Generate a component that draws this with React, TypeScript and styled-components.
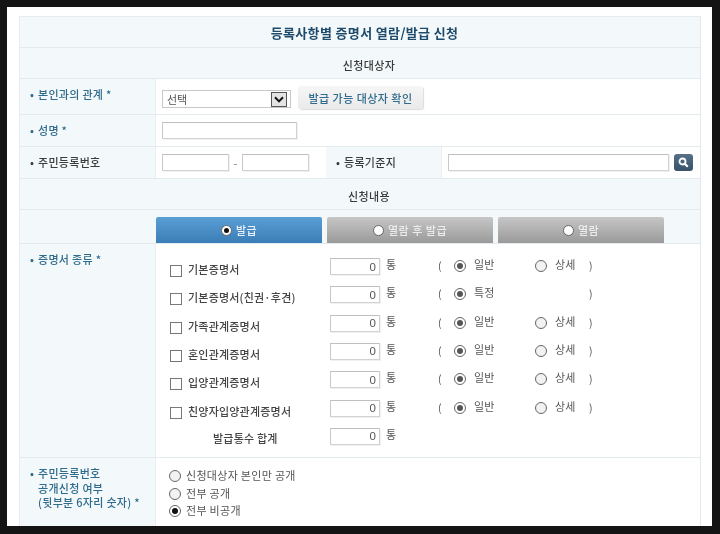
import React from "react";
import styled, { createGlobalStyle } from "styled-components";

const Global = createGlobalStyle`
  html, body { margin: 0; padding: 0; background: #141414; }
  body { font-family: "Noto Sans CJK KR", "Liberation Sans", sans-serif; color: #444; }
`;

const Frame = styled.div`
  width: 720px; height: 534px; box-sizing: border-box;
  padding: 7px 8px 8px 7px; background: #141414; overflow: hidden;
`;
const Panel = styled.div`
  height: 519px; box-sizing: border-box; background: #fff;
  padding: 9px 11px 0 12px; overflow: hidden; filter: blur(0.35px);
`;
const Table = styled.div`
  width: 682px; height: 510px; box-sizing: border-box;
  border-left: 1px solid #e6ecef; border-right: 1px solid #e4e8ea; border-top: 1px solid #e6ecef;
  display: flex; flex-direction: column;
`;
const HeadRow = styled.div<{ $h: number; $shift: number; $title?: boolean }>`
  flex: 0 0 ${p => p.$h}px; box-sizing: border-box;
  display: flex; align-items: center; justify-content: center;
  padding-left: ${p => p.$shift}px; padding-top: ${p => (p.$title ? 0 : 3)}px;
  background: #f3f8fa; border-bottom: 1px solid #e4ebee;
  font-size: ${p => (p.$title ? 13 : 11)}px;
  font-weight: ${p => (p.$title ? 700 : 500)};
  color: ${p => (p.$title ? "#1e4a6c" : "#3a3a3a")};
  letter-spacing: ${p => (p.$title ? "0.35px" : "0.4px")};
`;
const Row = styled.div<{ $h: number }>`
  flex: 0 0 ${p => p.$h}px; box-sizing: border-box;
  display: flex; border-bottom: 1px solid #e4ebee;
`;
const LabelCell = styled.div<{ $w: number; $top?: number; $center?: boolean; $dark?: boolean }>`
  flex: 0 0 ${p => p.$w}px; box-sizing: border-box;
  background: #f3f8fa; border-right: 1px solid #e8eef1;
  padding: ${p => p.$top ?? 0}px 0 0 10px;
  display: flex; align-items: ${p => (p.$center ? "center" : "flex-start")};
  font-size: 11px; font-weight: 500; line-height: 14.5px; letter-spacing: 0.3px;
  color: ${p => (p.$dark ? "#3c3c3c" : "#2f6b8c")};
`;
const Bullet = styled.span`
  flex: 0 0 8px; color: inherit;
`;
const ValueCell = styled.div<{ $pad?: number; $align?: string; $fixed?: number }>`
  flex: ${p => (p.$fixed ? `0 0 ${p.$fixed}px` : "1")}; box-sizing: border-box; min-width: 0;
  display: flex; align-items: ${p => p.$align ?? "flex-start"};
  padding-left: ${p => p.$pad ?? 6}px;
`;
const TextInput = styled.input<{ $w: number }>`
  width: ${p => p.$w}px; height: 17px; box-sizing: border-box;
  border: 1px solid #d2d2d2; border-top-color: #c0c0c0; border-left-color: #c8c8c8;
  background: #fff; padding: 0 3px; margin: 0; outline: none;
  box-shadow: 1px 1px 0 #f0f0f0; font: 11.5px "Liberation Sans", sans-serif; color: #555; text-align: right;
`;
const SelectBox = styled.div`
  position: relative; width: 129px; height: 18px; box-sizing: border-box;
  margin-top: 11px; border: 1px solid #c8c8c8; background: #fff;
  font-size: 11px; line-height: 16px; padding-left: 4px; color: #555;
`;
const SelectArrow = styled.span`
  position: absolute; right: 3px; top: 1px; width: 16px; height: 15px; box-sizing: border-box;
  border: 1px solid #555; background: #e4e4e4; display: flex; align-items: center; justify-content: center;
`;
const CheckButton = styled.button`
  margin: 7px 0 0 7px; width: 125px; height: 23px; box-sizing: border-box;
  border: 0; border-radius: 3px; background: linear-gradient(#f6f6f6, #eaeaea);
  box-shadow: 1px 1px 1px #ddd; padding: 0;
  font: 500 11px "Noto Sans CJK KR", sans-serif; letter-spacing: 0.45px; color: #2f6b8c;
`;
const Dash = styled.span`
  width: 13px; text-align: center; font-size: 11px; color: #777; line-height: 16px;
`;
const SearchButton = styled.button`
  margin: 0 0 0 5px; width: 19px; height: 17px; padding: 0; border: 0; border-radius: 3px;
  background: linear-gradient(#567086, #37516a); display: flex; align-items: center; justify-content: center;
`;
const Tab = styled.div<{ $active?: boolean }>`
  flex: 0 0 166px; height: 26px; box-sizing: border-box; border-radius: 2px 2px 0 0;
  display: flex; align-items: center; justify-content: center; gap: 4px;
  background: ${p => (p.$active ? "linear-gradient(#5b9fd7, #3b7db6)" : "linear-gradient(#c6c6c6, #9a9a9a)")};
  color: ${p => (p.$active ? "#e8f2fa" : "#ececec")};
  font-size: 11px; font-weight: 500; letter-spacing: 0.5px;
`;
const TabRow = styled.div`
  flex: 0 0 34px; box-sizing: border-box; display: flex; background: #f3f8fa;
  padding: 7px 0 0 136px; gap: 5px; border-bottom: 1px solid #e4ebee;
`;
const TabDot = styled.span<{ $on?: boolean }>`
  width: 11px; height: 11px; box-sizing: border-box; border-radius: 50%; background: #fff;
  border: 1px solid #666; display: flex; align-items: center; justify-content: center;
  &::after { content: ""; width: 5px; height: 5px; border-radius: 50%; background: ${p => (p.$on ? "#111" : "transparent")}; }
`;
const CertList = styled.div`
  padding: 14px 0 0 14px; display: flex; flex-direction: column;
`;
const CertRow = styled.div`
  height: 28.33px; display: grid; align-items: start; color: #444;
  grid-template-columns: 18px 142px 51px 57px 16px 20px 61px 20px 34px 10px;
  font-size: 11px; letter-spacing: 0.2px;
`;
const Box = styled.span`
  width: 12px; height: 12px; box-sizing: border-box; margin-top: 7px; border: 1.5px solid #777; background: #fff;
`;
const CertName = styled.span`
  line-height: 14px; margin-top: 4px; white-space: nowrap; font-weight: 500; color: #444;
`;
const TotalName = styled.span`
  grid-column: 1 / span 2; padding-left: 43px; line-height: 14px; margin-top: 3px; font-weight: 500; color: #444;
`;
const Unit = styled.span`
  padding-left: 5px; line-height: 14px; margin-top: -1px; color: #555;
`;
const Paren = styled.span`
  line-height: 16px; margin-top: 0; color: #555; font-size: 10.5px;
`;
const Opt = styled.span`
  line-height: 14px; margin-top: -1px; color: #555;
`;
const Radio = styled.span<{ $on?: boolean; $dark?: boolean; $top?: number }>`
  width: 12px; height: 12px; box-sizing: border-box; margin-top: ${p => p.$top ?? 2}px;
  border-radius: 50%; border: 1px solid #666; background: ${p => (p.$on ? "#fff" : "#f2f2f2")};
  display: flex; align-items: center; justify-content: center;
  &::after { content: ""; width: 6px; height: 6px; border-radius: 50%;
    background: ${p => (p.$on ? (p.$dark ? "#111" : "#555") : "transparent")}; }
`;
const Disclosure = styled.div`
  padding: 11px 0 0 13px; display: flex; flex-direction: column; gap: 3.5px;
`;
const DisclosureItem = styled.div`
  display: flex; align-items: flex-start; gap: 5px; height: 14px;
  font-size: 11px; line-height: 13px; letter-spacing: 0.3px; color: #555;
`;
const LabelText = styled.div`
  display: flex; flex-direction: column;
`;

type Cert = { name: string; first: string; second?: string };
const certs: Cert[] = [
  { name: "기본증명서", first: "일반", second: "상세" },
  { name: "기본증명서(친권·후견)", first: "특정" },
  { name: "가족관계증명서", first: "일반", second: "상세" },
  { name: "혼인관계증명서", first: "일반", second: "상세" },
  { name: "입양관계증명서", first: "일반", second: "상세" },
  { name: "친양자입양관계증명서", first: "일반", second: "상세" },
];

export default function App() {
  return (
    <Frame>
      <Global />
      <Panel>
        <Table>
          <HeadRow $h={31} $shift={9} $title>등록사항별 증명서 열람/발급 신청</HeadRow>
          <HeadRow $h={31} $shift={18}>신청대상자</HeadRow>
          <Row $h={36}>
            <LabelCell $w={136} $top={8}><Bullet>•</Bullet>본인과의 관계 *</LabelCell>
            <ValueCell>
              <SelectBox>
                선택
                <SelectArrow>
                  <svg width="10" height="7" viewBox="0 0 10 7"><path d="M1 1.2 5 5.4 9 1.2" fill="none" stroke="#111" strokeWidth="2" /></svg>
                </SelectArrow>
              </SelectBox>
              <CheckButton>발급 가능 대상자 확인</CheckButton>
            </ValueCell>
          </Row>
          <Row $h={32}>
            <LabelCell $w={136} $top={8}><Bullet>•</Bullet>성명 *</LabelCell>
            <ValueCell $align="center"><TextInput $w={135} readOnly /></ValueCell>
          </Row>
          <Row $h={32}>
            <LabelCell $w={136} $center $dark><Bullet>•</Bullet>주민등록번호</LabelCell>
            <ValueCell $align="center" $fixed={170}>
              <TextInput $w={67} readOnly /><Dash>-</Dash><TextInput $w={67} readOnly />
            </ValueCell>
            <LabelCell $w={116} $center $dark><Bullet>•</Bullet>등록기준지</LabelCell>
            <ValueCell $align="center">
              <TextInput $w={221} readOnly />
              <SearchButton aria-label="검색">
                <svg width="11" height="11" viewBox="0 0 11 11"><circle cx="4.5" cy="4.5" r="3" fill="none" stroke="#fff" strokeWidth="1.8" /><path d="M6.8 6.8 9.8 9.8" stroke="#fff" strokeWidth="2.2" /></svg>
              </SearchButton>
            </ValueCell>
          </Row>
          <HeadRow $h={31} $shift={18}>신청내용</HeadRow>
          <TabRow>
            <Tab $active><TabDot $on />발급</Tab>
            <Tab><TabDot />열람 후 발급</Tab>
            <Tab><TabDot />열람</Tab>
          </TabRow>
          <Row $h={214}>
            <LabelCell $w={136} $top={8}><Bullet>•</Bullet>증명서 종류 *</LabelCell>
            <ValueCell $pad={0}>
              <CertList>
                {certs.map(c => (
                  <CertRow key={c.name}>
                    <Box />
                    <CertName>{c.name}</CertName>
                    <TextInput $w={50} defaultValue="0" readOnly />
                    <Unit>통</Unit>
                    <Paren>(</Paren>
                    <Radio $on />
                    <Opt>{c.first}</Opt>
                    {c.second ? <Radio /> : <span />}
                    <Opt>{c.second ?? ""}</Opt>
                    <Paren>)</Paren>
                  </CertRow>
                ))}
                <CertRow>
                  <TotalName>발급통수 합계</TotalName>
                  <TextInput $w={50} defaultValue="0" readOnly />
                  <Unit>통</Unit>
                </CertRow>
              </CertList>
            </ValueCell>
          </Row>
          <Row $h={80}>
            <LabelCell $w={136} $top={8}>
              <Bullet>•</Bullet>
              <LabelText>
                <span>주민등록번호</span>
                <span>공개신청 여부</span>
                <span>(뒷부분 6자리 숫자) *</span>
              </LabelText>
            </LabelCell>
            <ValueCell $pad={0}>
              <Disclosure>
                <DisclosureItem><Radio $top={1} />신청대상자 본인만 공개</DisclosureItem>
                <DisclosureItem><Radio $top={1} />전부 공개</DisclosureItem>
                <DisclosureItem><Radio $on $dark $top={1} />전부 비공개</DisclosureItem>
              </Disclosure>
            </ValueCell>
          </Row>
        </Table>
      </Panel>
    </Frame>
  );
}
